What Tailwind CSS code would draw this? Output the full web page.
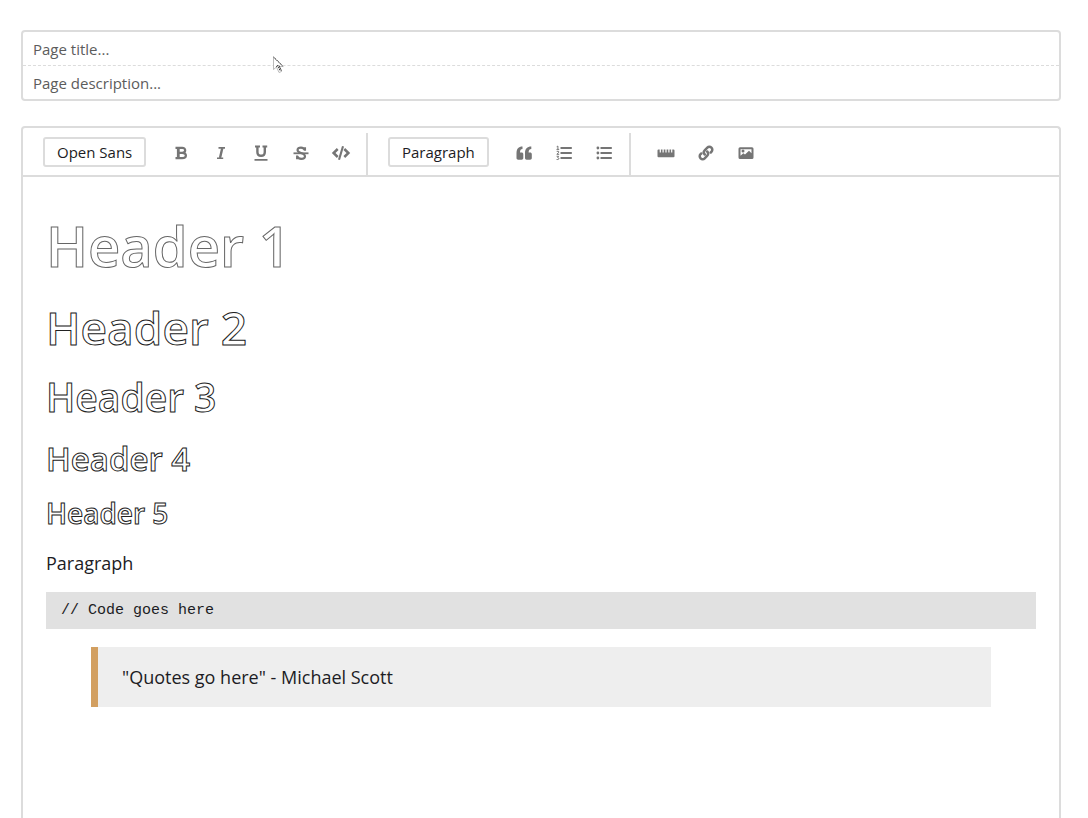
<!DOCTYPE html>
<html lang="en">
<head>
<meta charset="utf-8">
<meta name="viewport" content="width=device-width, initial-scale=1">
<title>Page editor</title>
<script src="https://cdn.jsdelivr.net/npm/@tailwindcss/browser@4"></script>
</head>
<body class="relative flex min-h-screen flex-col bg-white pt-[30px] pr-[27px] pl-[21px] font-['Open_Sans',sans-serif] text-[#1c1c24]">
  <form class="flex flex-col rounded-[4px] border-2 border-[#dcdcdc]">
    <input type="text" aria-label="Page title" placeholder="Page title..." class="h-[34px] border-b border-dashed border-[#dcdcdc] px-[10px] text-[15px] outline-none placeholder:text-[#5c5c5c]">
    <input type="text" aria-label="Page description" placeholder="Page description..." class="h-[33px] px-[10px] text-[15px] outline-none placeholder:text-[#5c5c5c]">
  </form>

  <main class="mt-[25px] flex flex-1 flex-col rounded-t-[4px] border-2 border-b-0 border-[#dcdcdc]">
    <div role="toolbar" aria-label="Formatting" class="flex border-b-2 border-[#dcdcdc] pt-[5px] text-[#757575]">
      <div class="flex h-[42px] items-center border-r-2 border-[#dcdcdc] pr-[5px] pb-0.5 pl-5">
        <select aria-label="Font" class="mt-1 mr-[15px] h-[30px] w-[103px] appearance-none self-start rounded-[3px] border-2 border-[#dcdcdc] px-3 text-[15px] text-[#1c1c24]"><option>Open Sans</option></select>
        <button type="button" aria-label="Bold" class="flex h-[30px] w-10 items-center justify-center">
          <svg class="size-4" viewBox="0 0 16 16" fill="none" stroke="currentColor" stroke-width="2.200"><path d="M2.500 2.800H9.200C11.200 2.800 12.200 3.800 12.200 5.300S11.200 7.800 9.200 7.800H5M9.200 7.800C11.700 7.800 12.900 8.900 12.900 10.500S11.700 13.200 9.200 13.200H2.500"/><path d="M5.300 3V13" stroke-width="2.800"/></svg>
        </button>
        <button type="button" aria-label="Italic" class="flex h-[30px] w-10 items-center justify-center">
          <svg class="size-4" viewBox="0 0 16 16" fill="none" stroke="currentColor"><path d="M5.500 2.900H12M4 13.200H10.200" stroke-width="1.600"/><path d="M9.300 3L7 13" stroke-width="2.400"/></svg>
        </button>
        <button type="button" aria-label="Underline" class="flex h-[30px] w-10 items-center justify-center">
          <svg class="size-4" viewBox="0 0 16 16" fill="none" stroke="currentColor"><path d="M2 1.500H7M9.500 1.500H14.200M1.500 14.800H14.500" stroke-width="1.800"/><path d="M4.400 1.500V7C4.400 9.500 5.800 10.800 8.100 10.800S11.800 9.500 11.800 7V1.500" stroke-width="2.400"/></svg>
        </button>
        <button type="button" aria-label="Strikethrough" class="flex h-[30px] w-10 items-center justify-center">
          <svg class="size-4" viewBox="0 0 16 16" fill="none" stroke="currentColor"><path d="M.500 8.300H15.500" stroke-width="1.800"/><path d="M12 5.700V2.200M11.800 5C11 3.300 9.800 2.600 8 2.600C5.800 2.600 4.500 3.500 4.500 5C4.500 6.500 6 7.300 8 7.900C10.500 8.600 12 9.500 12 11.200C12 12.900 10.500 13.900 8.200 13.900C6.200 13.900 5 13.100 4.300 11.500M4.100 10.600V14.300" stroke-width="2.100"/></svg>
        </button>
        <button type="button" aria-label="Code" class="flex h-[30px] w-10 items-center justify-center">
          <svg class="h-4 w-5" viewBox="0 0 20 16" fill="none" stroke="currentColor" stroke-width="2.500"><path d="M6.700 4L2.600 8L6.700 12M13.300 4L17.400 8L13.300 12"/><path d="M12 1.300L8 14.700" stroke-width="2.100"/></svg>
        </button>
      </div>
      <div class="flex h-[42px] items-center border-r-2 border-[#dcdcdc] pr-[5px] pb-0.5 pl-5">
        <select aria-label="Block style" class="mt-1 mr-[15px] h-[30px] w-[101px] appearance-none self-start rounded-[3px] border-2 border-[#dcdcdc] px-3 text-[15px] text-[#1c1c24]"><option>Paragraph</option></select>
        <button type="button" aria-label="Quote" class="flex h-[30px] w-10 items-center justify-center">
          <svg class="size-4" viewBox="0 0 16 16" fill="currentColor"><path d="M6.500 1.500V4C4.800 4 4 5 4 7.500H5.500C6.600 7.500 7.300 8.200 7.300 9.200V13C7.300 14 6.600 14.700 5.600 14.700H2.200C1.200 14.700.500 14 .500 13V8C.500 3.800 2.500 1.500 6.500 1.500ZM15.300 1.500V4C13.600 4 12.600 5 12.600 7.500H14C15.100 7.500 15.800 8.200 15.800 9.200V13C15.800 14 15.100 14.700 14.100 14.700H10.700C9.700 14.700 9 14 9 13V8C9 3.800 11.200 1.500 15.300 1.500Z"/></svg>
        </button>
        <button type="button" aria-label="Numbered list" class="flex h-[30px] w-10 items-center justify-center">
          <svg class="size-4" viewBox="0 0 16 16" fill="none" stroke="currentColor"><path d="M4.500 3H15.800M4.500 8H15.800M4.500 13H15.800" stroke-width="2"/><path d="M.700 1.700L1.900 1.100V4.300M.500 4.400H3.200M.700 6.300H2.600V7.700L.800 9.300H3.200M.600 11.300H2.600L1.700 12.700C3.300 12.700 3.200 14.500 1.800 14.500H.600" stroke-width="1"/></svg>
        </button>
        <button type="button" aria-label="Bulleted list" class="flex h-[30px] w-10 items-center justify-center">
          <svg class="size-4" viewBox="0 0 16 16" fill="currentColor"><path d="M4.500 2H15.800V4H4.500ZM4.500 7H15.800V9H4.500ZM4.500 12H15.800V14H4.500Z"/><circle cx="1.900" cy="3" r="1.400"/><circle cx="1.900" cy="8" r="1.400"/><circle cx="1.900" cy="13" r="1.400"/></svg>
        </button>
      </div>
      <div class="flex h-[42px] items-center pb-0.5 pl-[15px]">
        <button type="button" aria-label="Divider" class="flex h-[30px] w-10 items-center justify-center">
          <svg class="h-4 w-[18px]" viewBox="0 0 18 16" fill="currentColor"><path d="M1.500 4.500H2.700V7.500H3.900V4.500H5.500V7.500H6.700V4.500H8.400V7.500H9.600V4.500H11.300V7.500H12.500V4.500H14.100V7.500H15.300V4.500H16.500Q17.500 4.500 17.500 5.500V11.300Q17.500 12.300 16.500 12.300H1.500Q.500 12.300 .500 11.300V5.500Q.500 4.500 1.500 4.500Z"/></svg>
        </button>
        <button type="button" aria-label="Link" class="flex h-[30px] w-10 items-center justify-center">
          <svg class="size-4" viewBox="0 0 16 16" fill="none" stroke="currentColor" stroke-width="2.500" stroke-linecap="round"><path d="M6.800 9.500C5.500 8.200 5.500 6.500 6.700 5.300L9.300 2.700C10.500 1.500 12.200 1.500 13.400 2.700S14.600 5.600 13.400 6.800L12.700 7.500"/><path d="M9.200 6.500C10.500 7.800 10.500 9.500 9.300 10.700L6.700 13.300C5.500 14.500 3.800 14.500 2.600 13.300S1.400 10.400 2.600 9.200L3.300 8.500"/></svg>
        </button>
        <button type="button" aria-label="Image" class="flex h-[30px] w-10 items-center justify-center">
          <svg class="size-4" viewBox="0 0 16 16" fill="currentColor"><path fill-rule="evenodd" d="M2 2.300H14Q15.500 2.300 15.500 3.800V12.400Q15.500 13.900 14 13.900H2Q.500 13.900 .500 12.400V3.800Q.500 2.300 2 2.300ZM2.500 4.200V10.700L5.300 8.200L7 9.600L11 5.800L13.500 8.300V4.200Z"/><circle cx="5" cy="6" r="1.500"/></svg>
        </button>
      </div>
    </div>

    <article contenteditable="true" spellcheck="false" class="flex-1 px-[23px] pt-9 text-[18px] leading-7 outline-none">
      <h1 class="text-[56px] leading-[64px] font-semibold text-white [-webkit-text-stroke:1px_#666]">Header 1</h1>
      <h2 class="mt-[22px] text-[46px] leading-[56px] font-semibold text-white [-webkit-text-stroke:1px_#222]">Header 2</h2>
      <h3 class="mt-[18px] text-[39px] leading-[48px] font-semibold text-white [-webkit-text-stroke:1px_#222]">Header 3</h3>
      <h4 class="mt-[18px] text-[33px] leading-10 font-semibold text-white [-webkit-text-stroke:1px_#222]">Header 4</h4>
      <h5 class="mt-4 text-[28px] leading-9 font-semibold text-white [-webkit-text-stroke:1px_#222]">Header 5</h5>
      <p class="mt-[18px]">Paragraph</p>
      <pre class="mt-[15px] bg-[#e1e1e1] px-[15px] pt-[9px] pb-2 font-['Liberation_Mono',monospace] text-[15px] leading-5"><code class="font-['Liberation_Mono',monospace] text-[15px]">// Code goes here</code></pre>
      <blockquote class="mx-[45px] mt-[18px] border-l-[7px] border-[#d29f60] bg-[#eeeeee] px-6 py-4">"Quotes go here" - Michael Scott</blockquote>
    </article>
  </main>

  <!-- Mouse pointer -->
  <svg class="pointer-events-none absolute top-[56px] left-[272px] h-[19px] w-[13px]" viewBox="0 0 13 19" aria-hidden="true"><path d="M1.500 1V13.500L4.500 11L7 16.500L9.500 15.500L7.200 10.500H11.200Z" fill="#fff" stroke="#aaa" stroke-width=".800"/><path d="M1.500 1L11 10.300M4.500 11L5.500 9M5.500 9L8 14.500M7 9.500L9.500 14.500" fill="none" stroke="#333" stroke-width="1" stroke-dasharray="1.500 .700"/></svg>
</body>
</html>
